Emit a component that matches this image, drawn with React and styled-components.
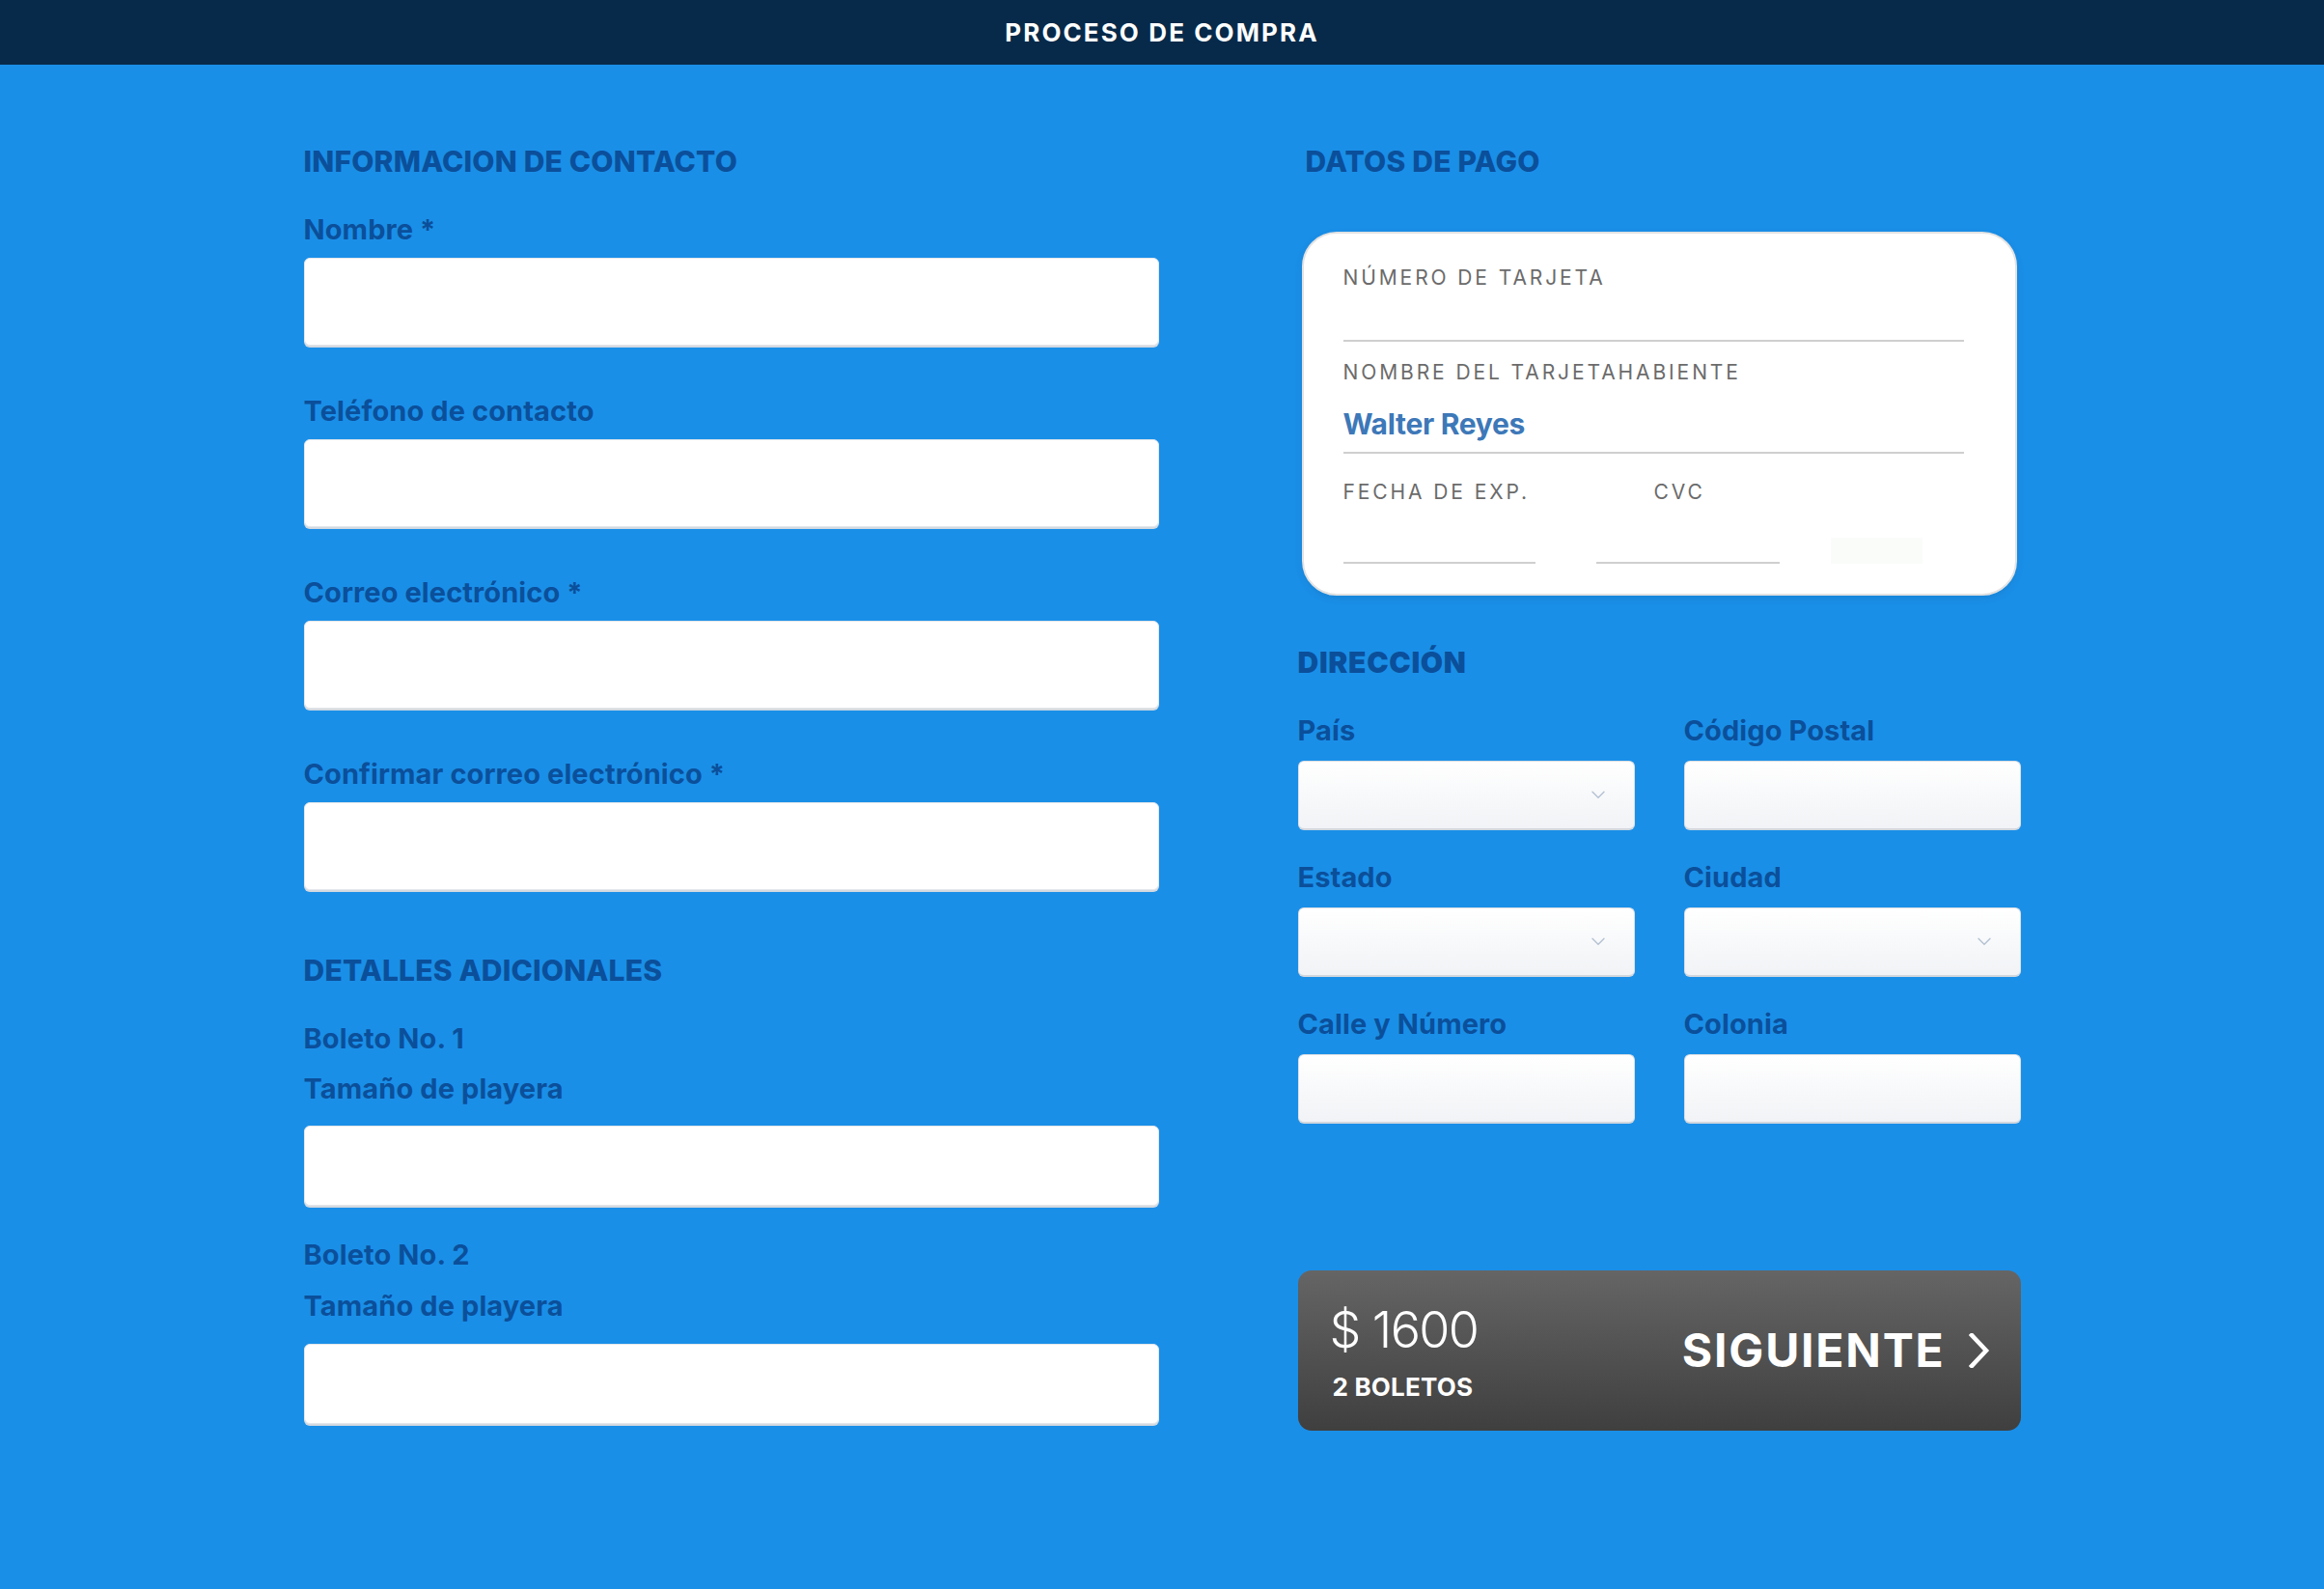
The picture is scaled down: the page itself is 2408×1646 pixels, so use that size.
import React from "react";
import styled, { createGlobalStyle } from "styled-components";

const GlobalStyle = createGlobalStyle`
  html, body { margin: 0; padding: 0; }
  body {
    background: #1a8fe8;
    font-family: Inter, "Noto Sans", "Liberation Sans", sans-serif;
  }
  * { box-sizing: border-box; }
`;

const Page = styled.div`
  min-height: 1646px;
  background: #1a8fe8;
`;

const TopBar = styled.header`
  height: 67px;
  background: #072a4a;
  display: flex;
  align-items: center;
  justify-content: center;
`;

const TopTitle = styled.h1`
  margin: 0;
  color: #ffffff;
  font-size: 26px;
  line-height: 26px;
  font-weight: 700;
  letter-spacing: 2.1px;
`;

const Main = styled.main`
  display: grid;
  grid-template-columns: 886px 749px;
  column-gap: 144px;
  justify-content: center;
  padding-top: 85px;
`;

const Column = styled.section`
  display: flex;
  flex-direction: column;
`;

const SectionTitle = styled.h2`
  margin: ${(p) => p.$mt || 0}px 0 0 ${(p) => p.$ml || 0}px;
  color: #0b4f9a;
  font-size: 30px;
  line-height: 30px;
  font-weight: ${(p) => p.$weight || 800};
  letter-spacing: ${(p) => (p.$weight === 900 ? "0.7px" : "0.2px")};
`;

const FieldGroup = styled.div`
  display: flex;
  flex-direction: column;
  gap: ${(p) => p.$gap || 15}px;
  margin-top: ${(p) => p.$mt || 0}px;
`;

const Label = styled.label`
  display: block;
  margin-top: ${(p) => p.$mt || 0}px;
  color: #0b4f9a;
  font-size: 29px;
  line-height: 29px;
  font-weight: 700;
  letter-spacing: 0.1px;
`;

const TextBox = styled.div`
  height: ${(p) => p.$h || 91}px;
  margin-top: ${(p) => p.$mt || 0}px;
  background: #ffffff;
  border: 1px solid #e4e7eb;
  border-radius: 6px;
  box-shadow: 0 2px 0 #d3d9e0;
`;

const Card = styled.div`
  margin: 58px 0 0 4px;
  width: 741px;
  height: 377px;
  background: #ffffff;
  border: 2px solid #e2e2e2;
  border-radius: 36px;
  box-shadow: 0 3px 8px rgba(0, 0, 0, 0.08);
  padding: 35px 53px 31px 41px;
  display: flex;
  flex-direction: column;
`;

const CardField = styled.div`
  display: flex;
  flex-direction: column;
  margin-top: ${(p) => p.$mt || 0}px;
  width: ${(p) => (p.$w ? `${p.$w}px` : "auto")};
  border-bottom: 2px solid #cfcfcf;
`;

const CardLabel = styled.span`
  display: block;
  margin-left: ${(p) => p.$ml || 0}px;
  color: #6b6b6b;
  font-size: 21px;
  line-height: 21px;
  font-weight: 400;
  letter-spacing: 2.9px;
  white-space: nowrap;
`;

const CardValue = styled.div`
  height: ${(p) => p.$h}px;
  padding-top: ${(p) => p.$pt || 0}px;
  color: #3d78b8;
  font-size: 30px;
  line-height: 30px;
  font-weight: 700;
  letter-spacing: -0.3px;
`;

const CardRow = styled.div`
  display: flex;
  align-items: flex-end;
  margin-top: 29px;
  gap: 63px;
`;

const GhostBox = styled.div`
  width: 95px;
  height: 27px;
  margin-left: -10px;
  background: #fafcfa;
`;

const AddressGrid = styled.div`
  display: grid;
  grid-template-columns: 349px 349px;
  column-gap: 51px;
  row-gap: 34px;
  margin-top: 41px;
`;

const SelectBox = styled.div`
  height: 72px;
  border: 1px solid #dcdfe4;
  border-bottom: 2px solid #d2d7de;
  border-radius: 6px;
  background: linear-gradient(180deg, #ffffff 0%, #f1f3f6 100%);
  display: flex;
  align-items: center;
  justify-content: flex-end;
  padding-right: 30px;
`;

const PayButton = styled.button`
  margin-top: 152px;
  height: 166px;
  width: 749px;
  border: none;
  border-radius: 14px;
  background: linear-gradient(180deg, #656565 0%, #3f3f3f 100%);
  display: flex;
  align-items: center;
  justify-content: space-between;
  padding: 0 31px 0 33px;
  color: #ffffff;
  font-family: inherit;
  cursor: pointer;
`;

const PriceBlock = styled.div`
  display: flex;
  flex-direction: column;
  align-items: flex-start;
  gap: 19px;
  padding-top: 2px;
`;

const Price = styled.span`
  font-size: 52px;
  line-height: 54px;
  font-weight: 300;
  letter-spacing: -1.6px;
`;

const Tickets = styled.span`
  margin-left: 3px;
  font-size: 26px;
  line-height: 26px;
  font-weight: 700;
  letter-spacing: 0.2px;
`;

const NextLabel = styled.span`
  display: flex;
  align-items: center;
  gap: 23px;
  font-size: 48px;
  line-height: 48px;
  font-weight: 700;
  letter-spacing: 1.8px;
`;

const Chevron = ({ size = 14 }) => (
  <svg width={size} height={size * 0.6} viewBox="0 0 14 8" fill="none">
    <path d="M1 1l6 6 6-6" stroke="#b4c1d2" strokeWidth="1.4" strokeLinecap="round" strokeLinejoin="round" />
  </svg>
);

const NextArrow = () => (
  <svg width="24" height="36" viewBox="0 0 24 36" fill="none">
    <path d="M4 2l15 16L4 34" stroke="#ffffff" strokeWidth="4.5" strokeLinecap="square" />
  </svg>
);

const contactFields = [
  "Nombre *",
  "Teléfono de contacto",
  "Correo electrónico *",
  "Confirmar correo electrónico *",
];

const addressFields = [
  { label: "País", select: true },
  { label: "Código Postal", select: false },
  { label: "Estado", select: true },
  { label: "Ciudad", select: true },
  { label: "Calle y Número", select: false },
  { label: "Colonia", select: false },
];

export default function App() {
  return (
    <Page>
      <GlobalStyle />
      <TopBar>
        <TopTitle>PROCESO DE COMPRA</TopTitle>
      </TopBar>
      <Main>
        <Column>
          <SectionTitle>INFORMACION DE CONTACTO</SectionTitle>
          {contactFields.map((f, i) => (
            <FieldGroup key={f} $mt={i === 0 ? 41 : 53}>
              <Label>{f}</Label>
              <TextBox />
            </FieldGroup>
          ))}
          <SectionTitle $mt={68}>DETALLES ADICIONALES</SectionTitle>
          <Label $mt={41}>Boleto No. 1</Label>
          <Label $mt={23}>Tamaño de playera</Label>
          <TextBox $mt={24} $h={83} />
          <Label $mt={36}>Boleto No. 2</Label>
          <Label $mt={24}>Tamaño de playera</Label>
          <TextBox $mt={25} $h={83} />
        </Column>
        <Column>
          <SectionTitle $ml={8}>DATOS DE PAGO</SectionTitle>
          <Card>
            <CardField>
              <CardLabel>NÚMERO DE TARJETA</CardLabel>
              <CardValue $h={54} />
            </CardField>
            <CardField $mt={21}>
              <CardLabel>NOMBRE DEL TARJETAHABIENTE</CardLabel>
              <CardValue $h={72} $pt={28}>Walter Reyes</CardValue>
            </CardField>
            <CardRow>
              <CardField $w={199}>
                <CardLabel>FECHA DE EXP.</CardLabel>
                <CardValue $h={62} />
              </CardField>
              <CardField $w={190}>
                <CardLabel $ml={60}>CVC</CardLabel>
                <CardValue $h={62} />
              </CardField>
              <GhostBox />
            </CardRow>
          </Card>
          <SectionTitle $mt={54} $weight={900}>DIRECCIÓN</SectionTitle>
          <AddressGrid>
            {addressFields.map((f) => (
              <FieldGroup key={f.label} $gap={17}>
                <Label>{f.label}</Label>
                <SelectBox>{f.select && <Chevron />}</SelectBox>
              </FieldGroup>
            ))}
          </AddressGrid>
          <PayButton>
            <PriceBlock>
              <Price>$ 1600</Price>
              <Tickets>2 BOLETOS</Tickets>
            </PriceBlock>
            <NextLabel>
              SIGUIENTE
              <NextArrow />
            </NextLabel>
          </PayButton>
        </Column>
      </Main>
    </Page>
  );
}
